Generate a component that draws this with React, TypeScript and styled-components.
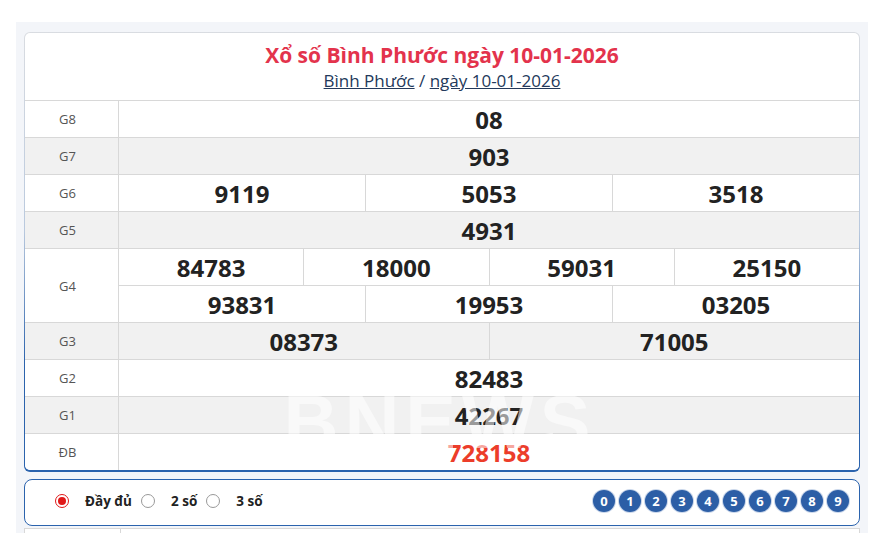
import styled, { createGlobalStyle } from 'styled-components';

const Global = createGlobalStyle`
  body {
    margin: 0;
    background: #ffffff;
    font-family: "Open Sans", "Noto Sans", Arial, sans-serif;
  }
`;

const Page = styled.div`
  width: 852px;
  margin: 22px 0 0 16px;
  padding: 10px 8px 0;
  box-sizing: border-box;
  background: #f3f5f9;
  height: 511px;
  overflow: hidden;
`;

const CardFrame = styled.div`
  position: relative;
  border-radius: 6px;
  padding: 1px 1px 2px 1px;
  background: linear-gradient(to bottom, #d9dce1 0%, #b9c9de 45%, #2b63ad 75%, #2b63ad 100%);

  /* faint site watermark drawn over the results */
  &::after {
    content: 'BNEWS';
    position: absolute;
    left: 236px;
    top: 346px;
    width: 360px;
    text-align: center;
    font-family: "Liberation Sans", Arial, sans-serif;
    font-size: 76px;
    font-weight: 900;
    letter-spacing: 6px;
    color: rgba(255, 255, 255, 0.55);
    pointer-events: none;
  }
`;

const Card = styled.div`
  background: #ffffff;
  border-radius: 5px;
  overflow: hidden;
`;

const Header = styled.div`
  height: 67px;
  display: flex;
  flex-direction: column;
  align-items: center;
  justify-content: center;
  padding-top: 2px;
  box-sizing: border-box;
`;

const Title = styled.h1`
  margin: 0;
  font-size: 21px;
  font-weight: 700;
  color: #e3334c;
  line-height: 27px;
`;

const Crumbs = styled.div`
  font-size: 17px;
  color: #23395b;
  line-height: 24px;
`;

const Crumb = styled.a`
  color: #23395b;
  text-decoration: underline;
`;

const Row = styled.div<{ $alt?: boolean }>`
  display: flex;
  border-top: 1px solid #d8d8d8;
  background: ${(p) => (p.$alt ? '#f1f1f1' : '#ffffff')};
`;

const Label = styled.div`
  width: 94px;
  flex-shrink: 0;
  border-right: 1px solid #d8d8d8;
  display: flex;
  align-items: center;
  justify-content: center;
  padding-right: 8px;
  box-sizing: border-box;
  font-size: 13px;
  color: #555;
`;

const Values = styled.div`
  flex: 1;
  display: flex;
  flex-direction: column;
`;

const SubRow = styled.div`
  display: flex;
  height: 36px;
  & + & {
    border-top: 1px solid #d8d8d8;
  }
`;

const Cell = styled.div<{ $special?: boolean }>`
  flex: 1;
  display: flex;
  align-items: center;
  justify-content: center;
  font-size: 24px;
  font-weight: 700;
  color: ${(p) => (p.$special ? '#ec3d2a' : '#222')};
  & + & {
    border-left: 1px solid #d8d8d8;
  }
`;

const Panel = styled.div`
  margin-top: 7px;
  height: 47px;
  box-sizing: border-box;
  background: #fff;
  border: 1px solid #2b63ad;
  border-radius: 8px;
  display: flex;
  align-items: center;
  justify-content: space-between;
  padding: 0 10px 3px 30px;
`;

const Options = styled.div`
  display: flex;
  align-items: center;
`;

const Option = styled.label`
  display: flex;
  align-items: center;
  font-size: 13.5px;
  font-weight: 700;
  color: #222;
  margin-right: 9px;
`;

const Radio = styled.span<{ $on?: boolean }>`
  width: 14px;
  height: 14px;
  border-radius: 50%;
  box-sizing: border-box;
  border: 1px solid ${(p) => (p.$on ? '#e01818' : '#999')};
  margin-right: 16px;
  display: flex;
  align-items: center;
  justify-content: center;
  &::after {
    content: '';
    width: 8px;
    height: 8px;
    border-radius: 50%;
    background: ${(p) => (p.$on ? '#e01818' : 'transparent')};
  }
`;

const Digits = styled.div`
  display: flex;
  gap: 4px;
`;

const Digit = styled.span`
  width: 22px;
  height: 22px;
  border-radius: 50%;
  background: #2c5ea6;
  box-shadow: 0 0 0 1px #c9d6ea;
  color: #fff;
  font-size: 13px;
  font-weight: 700;
  display: flex;
  align-items: center;
  justify-content: center;
`;

const NextCard = styled.div`
  margin-top: 2px;
  height: 20px;
  background: #fff;
  border: 1px solid #d8d8d8;
  border-bottom: none;
  display: flex;
`;

const NextLabel = styled.div`
  width: 95px;
  border-right: 1px solid #d8d8d8;
`;

type Prize = { label: string; rows: string[][]; alt?: boolean; special?: boolean };

const prizes: Prize[] = [
  { label: 'G8', rows: [['08']] },
  { label: 'G7', rows: [['903']], alt: true },
  { label: 'G6', rows: [['9119', '5053', '3518']] },
  { label: 'G5', rows: [['4931']], alt: true },
  { label: 'G4', rows: [['84783', '18000', '59031', '25150'], ['93831', '19953', '03205']] },
  { label: 'G3', rows: [['08373', '71005']], alt: true },
  { label: 'G2', rows: [['82483']] },
  { label: 'G1', rows: [['42267']], alt: true },
  { label: 'ĐB', rows: [['728158']], special: true },
];

function App() {
  return (
    <Page>
      <Global />
      <CardFrame>
        <Card>
          <Header>
            <Title>Xổ số Bình Phước ngày 10-01-2026</Title>
            <Crumbs>
              <Crumb>Bình Phước</Crumb> / <Crumb>ngày 10-01-2026</Crumb>
            </Crumbs>
          </Header>
          {prizes.map((p) => (
            <Row key={p.label} $alt={p.alt}>
              <Label>{p.label}</Label>
              <Values>
                {p.rows.map((r, i) => (
                  <SubRow key={i}>
                    {r.map((n) => (
                      <Cell key={n} $special={p.special}>{n}</Cell>
                    ))}
                  </SubRow>
                ))}
              </Values>
            </Row>
          ))}
        </Card>
      </CardFrame>
      <Panel>
        <Options>
          <Option><Radio $on />Đầy đủ</Option>
          <Option><Radio />2 số</Option>
          <Option><Radio />3 số</Option>
        </Options>
        <Digits>
          {[0, 1, 2, 3, 4, 5, 6, 7, 8, 9].map((d) => (
            <Digit key={d}>{d}</Digit>
          ))}
        </Digits>
      </Panel>
      <NextCard>
        <NextLabel />
      </NextCard>
    </Page>
  );
}

export default App;
